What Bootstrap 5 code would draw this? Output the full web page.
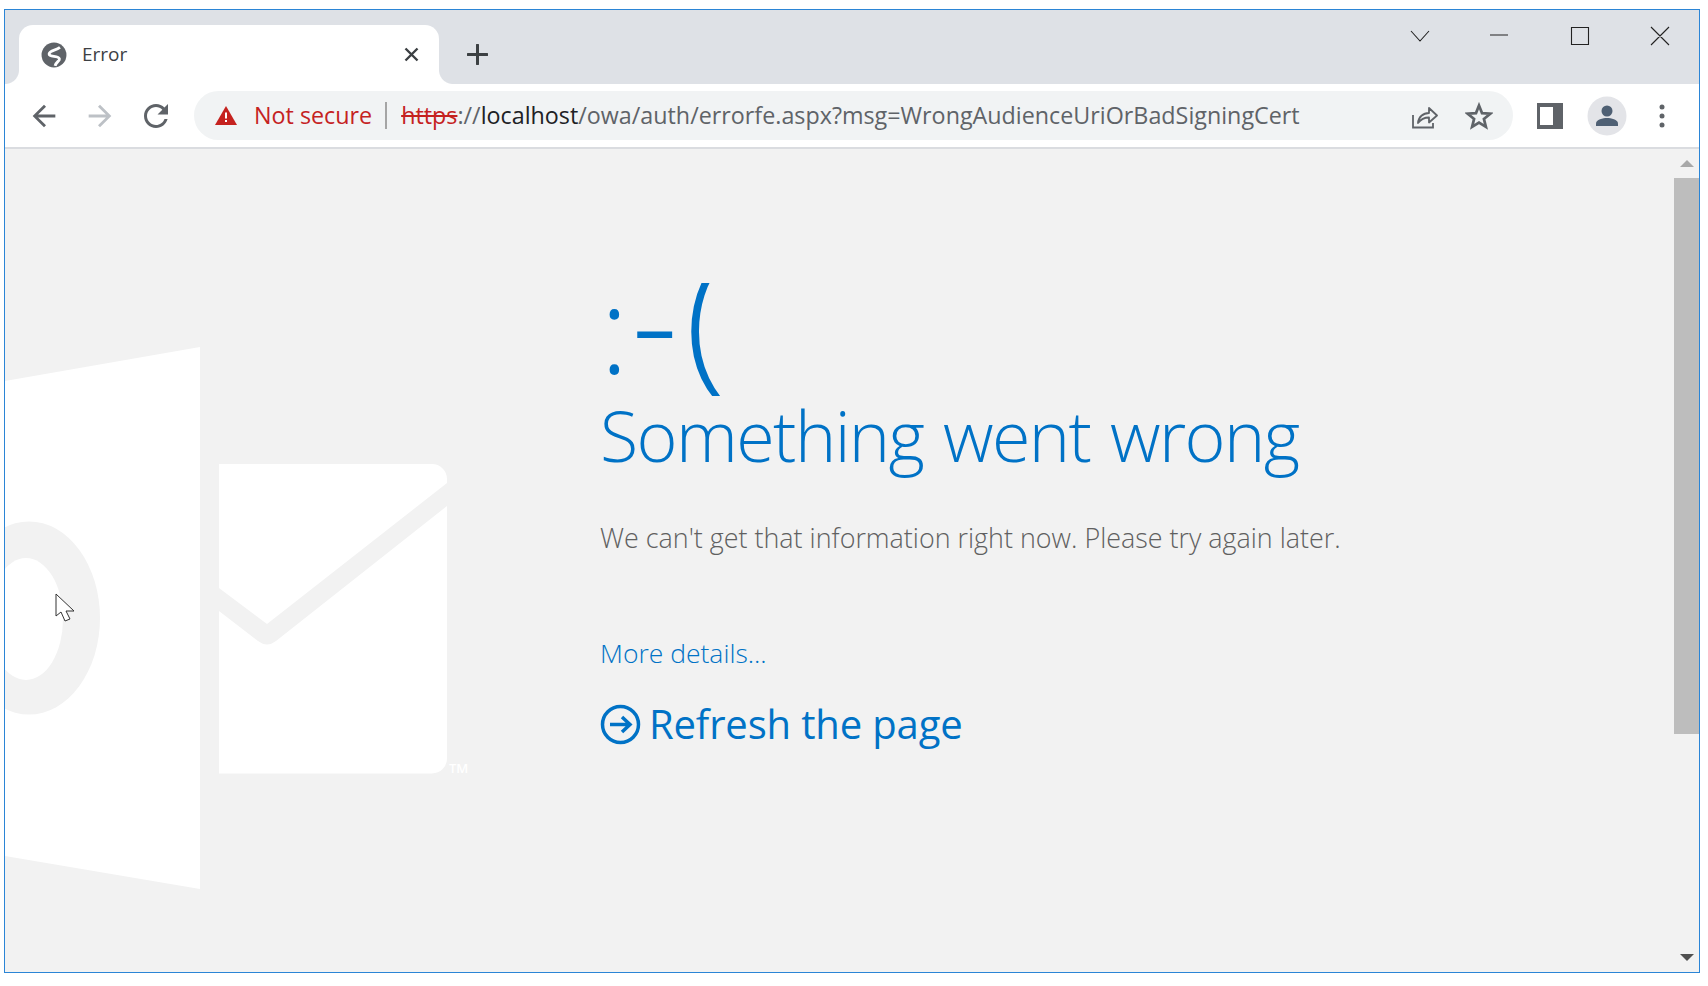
<!DOCTYPE html>
<html lang="en"><head><meta charset="utf-8"><title>Error</title>
<link href="https://cdn.jsdelivr.net/npm/bootstrap@5.3.0/dist/css/bootstrap.min.css" rel="stylesheet">
<style>
html,body{height:100%;overflow:hidden;background:#fff;}
body{padding:9px 8px 13px 4px;font-family:"Open Sans","Noto Sans",sans-serif;}
.win{height:964px;border:1px solid #2b85d6;}
.strip{height:74px;background:#dee1e6;padding-left:14px;}
.chrome-tab{width:420px;height:59px;margin-top:15px;background:#fff;border-radius:14px 14px 0 0;position:relative;padding:0 20px 0 22px;color:#3c4043;font-size:19px;}
.chrome-tab::before,.chrome-tab::after{content:"";position:absolute;bottom:0;width:14px;height:14px;}
.chrome-tab::before{left:-14px;background:radial-gradient(circle at 0 0,transparent 13.5px,#fff 14.5px);}
.chrome-tab::after{right:-14px;background:radial-gradient(circle at 100% 0,transparent 13.5px,#fff 14.5px);}
.tab-title{margin-left:15px;}
.plus-ic{margin-left:28px;margin-top:34px;}
.winctl{padding-top:14px;padding-right:29px;}
.tools{height:65px;background:#fff;border-bottom:2px solid #dadce0;padding:0 0 0 22px;}
.fwd-ic{margin-left:22px;}
.rel-ic{margin-left:21px;}
.omni{height:49px;width:1319px;background:#f1f3f4;border-radius:25px;margin-left:20px;padding:0 0 0 21px;font-size:23.300px;white-space:nowrap;color:#5f6368;}
.nsec{color:#c5221f;margin-left:17px;}
.sepr{width:2px;height:27px;background:#a5a5a5;margin:0 14px 0 13px;}
.strike{color:#c5221f;text-decoration:line-through;}
.host{color:#202124;}
.star-ic{margin-left:27px;margin-right:4px;}
.kebab-ic{margin-left:32px;}
.pagearea{background:#f2f2f2;min-height:0;position:relative;}
.wm{position:absolute;left:0;top:0;width:1669px;height:823px;}
.msg{position:relative;margin-left:595px;padding-top:134px;color:#0072c6;font-weight:300;}
.emo{height:113px;overflow:hidden;font-size:120px;line-height:89px;white-space:nowrap;}
.emo span{line-height:0;}
.emo-c{letter-spacing:3px;}
.emo-d{font-size:144px;letter-spacing:7px;}
.emo-p{font-size:153px;}
.ttl{font-size:70px;line-height:90px;margin-top:-6px;white-space:nowrap;letter-spacing:-1.600px;word-spacing:3px;}
.desc{font-size:26.900px;line-height:36px;color:#606060;margin-top:40px;}
.more{font-size:26.500px;line-height:36px;margin-top:79px;color:#0072c6;text-decoration:none;display:block;}
.refresh{font-size:40px;font-weight:400;line-height:56px;margin-top:25px;color:#0072c6;text-decoration:none;letter-spacing:-.15px;}
.sbar{width:25px;background:#f2f2f2;}
.sthumb{height:556px;background:#bdbdbd;margin-top:33px;}
.sarrow{width:0;height:0;border-left:7px solid transparent;border-right:7px solid transparent;}
.s-up{border-bottom:7px solid #a8a8a8;margin:11px auto -22px;}
.s-dn{border-top:7px solid #505050;margin:0 auto 11px;}
</style></head>
<body>
<div class="win d-flex flex-column">
  <div class="strip d-flex flex-shrink-0">
    <div class="chrome-tab d-flex align-items-center">
      <svg width="26" height="26" viewBox="0 0 24 24"><circle cx="12" cy="12" r="11.500" fill="#5f6368"/><path d="M17.500 5C13.500 8 8 7.500 7.500 11C7.500 14.500 16 12 17 15.500C17.500 17.500 14 18 13 22" fill="none" stroke="#fff" stroke-width="2.600"/></svg>
      <span class="tab-title flex-grow-1">Error</span>
      <svg width="15" height="15" viewBox="0 0 15 15"><path d="M1.500 1.500l12 12M13.500 1.500l-12 12" stroke="#3c4043" stroke-width="2.400" fill="none"/></svg>
    </div>
    <svg class="plus-ic" width="21" height="21" viewBox="0 0 21 21"><path d="M10.500 1v19M1 10.500h19" stroke="#3c4043" stroke-width="3" stroke-linecap="round" fill="none"/></svg>
    <div class="winctl ms-auto d-flex align-items-start">
      <svg width="260" height="24" viewBox="1410 24 260 24" fill="none" stroke="#222" stroke-width="1.100"><path d="M1411 31l9 10 9-10M1490 35h18M1571.500 27.500h17v17h-17zM1651 27l18 18M1669 27l-18 18"/></svg>
    </div>
  </div>
  <div class="tools d-flex align-items-center flex-shrink-0">
    <svg width="34" height="34" viewBox="0 0 24 24"><path d="M20 11H7.830l5.590-5.590L12 4l-8 8 8 8 1.410-1.410L7.830 13H20v-2z" fill="#5f6368"/></svg>
    <svg class="fwd-ic" width="34" height="34" viewBox="0 0 24 24"><path d="M4 11h12.170l-5.590-5.590L12 4l8 8-8 8-1.410-1.410L16.170 13H4v-2z" fill="#bdc1c6"/></svg>
    <svg class="rel-ic" width="36" height="36" viewBox="0 0 24 24"><path d="M17.650 6.350C16.200 4.900 14.210 4 12 4c-4.420 0-7.990 3.580-7.990 8s3.570 8 7.990 8c3.730 0 6.840-2.550 7.730-6h-2.080c-.82 2.330-3.040 4-5.650 4-3.310 0-6-2.690-6-6s2.690-6 6-6c1.660 0 3.140.69 4.220 1.780L13 11h7V4l-2.350 2.350z" fill="#5f6368"/></svg>
    <div class="omni d-flex align-items-center">
      <svg width="22" height="19" viewBox="0 0 22 19"><path d="M11 0l11 19H0z" fill="#c5221f"/><path d="M10 6.500h2v6h-2zM10 14h2v2h-2z" fill="#fff"/></svg>
      <span class="nsec">Not secure</span><span class="sepr"></span>
      <span><span class="strike">https</span>://<span class="host">localhost</span>/owa/auth/errorfe.aspx?msg=WrongAudienceUriOrBadSigningCert</span>
      <span class="ms-auto d-flex align-items-center pe-3">
        <svg width="26" height="26" viewBox="0 0 26 26" fill="none" stroke="#5f6368" stroke-width="1.800"><path d="M1 12v12.500h20V20"/><path d="M6 20c.5-6 5-10 11-10V5l8 7.500-8 7v-5c-5 0-8 1.500-11 5.500z" stroke-linejoin="round"/></svg>
        <svg class="star-ic" width="28" height="28" viewBox="0 0 28 28"><path d="M14 3.500l3 7.600 8.200.6-6.300 5.200 2 8-6.900-4.400-6.900 4.400 2-8-6.300-5.200 8.200-.6z" fill="none" stroke="#5f6368" stroke-width="2.700"/></svg>
      </span>
    </div>
    <svg class="ms-4" width="26" height="26" viewBox="0 0 26 26"><path d="M0 0h26v26H0z" fill="#5f6368"/><path d="M3 4h13v18H3z" fill="#fff"/></svg>
    <svg class="ms-4" width="40" height="40" viewBox="0 0 40 40"><circle cx="20" cy="20" r="19.500" fill="#e3e4e8"/><circle cx="20" cy="15" r="5.500" fill="#4f6074"/><path d="M9 30v-2.500c0-4 7-5.500 11-5.500s11 1.500 11 5.500V30z" fill="#4f6074"/></svg>
    <svg class="kebab-ic" width="6" height="24" viewBox="0 0 6 24"><circle cx="3" cy="3" r="2.500" fill="#5f6368"/><circle cx="3" cy="12" r="2.500" fill="#5f6368"/><circle cx="3" cy="21" r="2.500" fill="#5f6368"/></svg>
  </div>
  <div class="pagearea flex-grow-1 d-flex">
    <svg class="wm" viewBox="5 149 1669 823">
      <path d="M5 381L200 347V889L5 856z" fill="#fff"/>
      <ellipse cx="29" cy="618" rx="71" ry="96.500" fill="#f2f2f2"/>
      <ellipse cx="26" cy="619" rx="37" ry="61" fill="#fff"/>
      <path d="M219 464H432a15 15 0 0 1 15 15V758.500a15 15 0 0 1-15 15H219z" fill="#fff"/>
      <path d="M219 588L267 624L447 483V506L276 641Q267 648 258 641L219 611z" fill="#f2f2f2"/>
      <text x="449" y="773" font-size="13" fill="#fff" font-family="Open Sans, sans-serif" font-weight="600">TM</text>
      <path d="M56 594V616L61 612L65 621L70 619L66 611H74z" fill="#fff" stroke="#333" stroke-width="1"/>
    </svg>
    <div class="msg flex-grow-1">
      <div class="emo"><span class="emo-c">:</span><span class="emo-d">-</span><span class="emo-p">(</span></div>
      <div class="ttl">Something went wrong</div>
      <div class="desc">We can't get that information right now. Please try again later.</div>
      <a class="more" href="#">More details...</a>
      <a class="refresh d-flex align-items-center" href="#">
        <svg class="me-2" width="41" height="41" viewBox="0 0 41 41" fill="none" stroke="#0072c6"><circle cx="20.500" cy="20.500" r="18" stroke-width="3.500"/><path d="M10 20.500h20M22 13l8 7.500-8 7.500" stroke-width="3.500"/></svg>
        <span>Refresh the page</span>
      </a>
    </div>
    <div class="sbar d-flex flex-column flex-shrink-0">
      <div class="sarrow s-up"></div>
      <div class="sthumb"></div>
      <div class="sarrow s-dn mt-auto"></div>
    </div>
  </div>
</div>
<script src="https://cdn.jsdelivr.net/npm/bootstrap@5.3.0/dist/js/bootstrap.bundle.min.js"></script>
</body></html>
